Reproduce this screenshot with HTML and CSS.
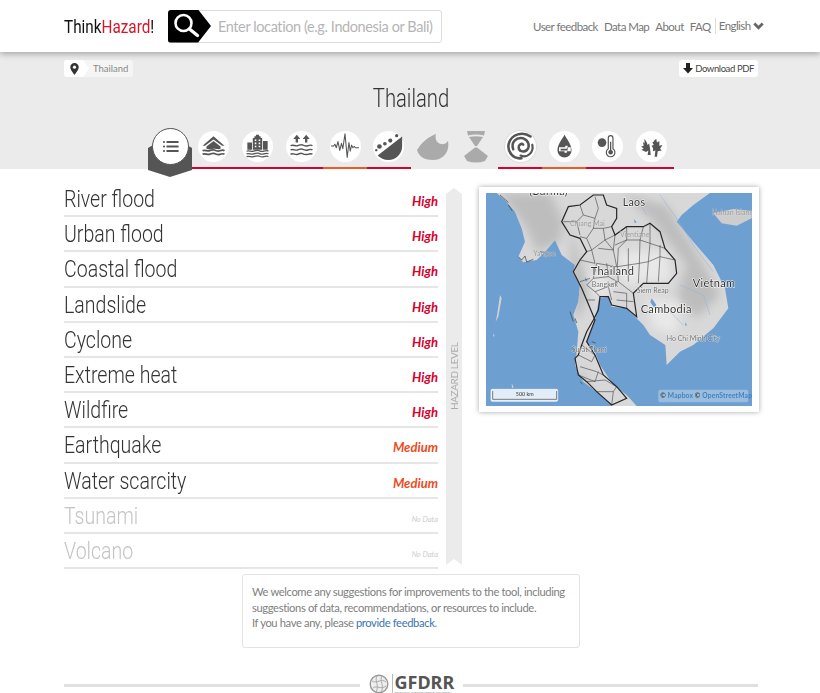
FILE: index.html
```html
<!DOCTYPE html>
<html lang="en">
<head>
<meta charset="utf-8">
<title>ThinkHazard! - Thailand</title>
<link rel="stylesheet" href="styles.css">
</head>
<body>
<header class="topbar">
  <div class="wrap topbar-in">
    <a class="logo">Think<span class="logo-red">Hazard</span>!</a>
    <div class="search">
      <span class="search-btn"><svg width="28" height="28" viewBox="0 0 28 28"><circle cx="11.5" cy="11" r="8" fill="none" stroke="#fff" stroke-width="2.6"/><path d="M17.5 17l8 6.5" stroke="#fff" stroke-width="3.4" stroke-linecap="round"/></svg></span>
      <span class="search-ph">Enter location (e.g. Indonesia or Bali)</span>
    </div>
    <nav class="nav">
      <a>User feedback</a><a>Data Map</a><a>About</a><a>FAQ</a>
      <span class="lang">English <svg width="11" height="8" viewBox="0 0 11 8"><path d="M1.3 1.5L5.5 5.7 9.7 1.5" fill="none" stroke="#666" stroke-width="2.8"/></svg></span>
    </nav>
  </div>
</header>

<section class="band">
  <div class="wrap">
    <div class="crumbs">
      <div class="crumb">
        <span class="crumb-pin"><svg width="9" height="12" viewBox="0 0 9 12"><path d="M4.5 0a4.2 4.2 0 0 0-4.2 4.2c0 2.8 4.2 7.6 4.2 7.6s4.2-4.8 4.2-7.6A4.2 4.2 0 0 0 4.5 0z" fill="#333"/><circle cx="4.5" cy="4.2" r="1.6" fill="#fff"/></svg></span>
        <span class="crumb-name">Thailand</span>
      </div>
      <a class="pdf"><svg width="10" height="11" viewBox="0 0 10 11"><path d="M3 0h4v5h3L5 10.5 0 5h3z" fill="#222"/></svg>Download PDF</a>
    </div>
    <h1 class="country">Thailand</h1>
    <div class="tabs">
      <div class="tab tab-active">
        <svg class="shield" width="44" height="42" viewBox="0 0 44 42"><path d="M0 13L22 0l22 13v22l-22 7-22-7z" fill="#555"/></svg>
        <span class="disc disc-active"><svg width="17" height="13" viewBox="0 0 20 16"><g fill="#555"><circle cx="2" cy="2.5" r="1.3"/><circle cx="2" cy="8" r="1.3"/><circle cx="2" cy="13.5" r="1.3"/><rect x="5" y="1.2" width="15" height="2.6" rx=".8"/><rect x="5" y="6.7" width="15" height="2.6" rx=".8"/><rect x="5" y="12.2" width="15" height="2.6" rx=".8"/></g></svg></span>
      </div>
      <div class="tab line-high"><span class="disc"><svg class="ico" viewBox="0 0 32 32"><path d="M2 15L16 3l14 12h-3L16 7 5 15z" fill="#555"/><path d="M7 16l9-7 9 7v3c-3 1.500-6-1-9 0s-6 1-9 0z" fill="#555"/><path d="M2 21.500c3-2 6 1 9 0s4-2 6-1 4 2 7 1 5-1 6 0M2 26c3-2 6 1 9 0s4-2 6-1 4 2 7 1 5-1 6 0" fill="none" stroke="#555" stroke-width="2.200"/></svg></span></div>
      <div class="tab line-high"><span class="disc"><svg class="ico" viewBox="0 0 32 32"><path d="M3 11h6v9H3zM10 5h2V3h2V1h4v2h2v2h2v15H10zM23 9h6v11h-6z" fill="#555"/><path d="M12.500 7h2v2h-2zM17.500 7h2v2h-2zM12.500 11h2v2h-2zM17.500 11h2v2h-2zM12.500 15h2v2h-2zM17.500 15h2v2h-2z" fill="#fff"/><path d="M2 22c3-1.500 6 1 9 0s4-1.500 6-1 4 2 7 1 5-1 6 0M2 25.500c3-1.500 6 1 9 0s4-1.500 6-1 4 2 7 1 5-1 6 0M2 29c3-1.500 6 1 9 0s4-1.500 6-1 4 2 7 1 5-1 6 0" fill="none" stroke="#555" stroke-width="1.600"/></svg></span></div>
      <div class="tab line-high"><span class="disc"><svg class="ico" viewBox="0 0 32 32"><path d="M10 1l4.500 5.500h-3V11h-3V6.500h-3zM22 1l4.500 5.500h-3V11h-3V6.500h-3z" fill="#555"/><path d="M2 15c3-2 6 1 9 0s4-2 6-1 4 2 7 1 5-1 6 0M2 20.500c3-2 6 1 9 0s4-2 6-1 4 2 7 1 5-1 6 0M2 26c3-2 6 1 9 0s4-2 6-1 4 2 7 1 5-1 6 0" fill="none" stroke="#555" stroke-width="1.800"/></svg></span></div>
      <div class="tab line-med"><span class="disc"><svg class="ico ico-wide" viewBox="0 0 32 32"><path d="M0 16h3l1.500-2 1.500 4 2-7 2 10 2-8 1.500 6L16 2l2.500 27 2-17 1.500 10 1.500-7 1.500 3 1.500-1.500 1.500 1.500H32" fill="none" stroke="#555" stroke-width="1.200" stroke-linejoin="round"/></svg></span></div>
      <div class="tab line-high"><span class="disc"><svg class="ico big" viewBox="0 0 32 32"><path d="M31 5v11c0 8-7 15-15 15-5 0-9-2-12-5z" fill="#555"/><circle cx="25" cy="4" r="1.800" fill="#555"/><circle cx="18" cy="9.500" r="2.300" fill="#555"/><circle cx="12" cy="13" r="2" fill="#555"/><circle cx="6" cy="16" r="2.600" fill="#555"/><circle cx="2.500" cy="20" r="1.300" fill="#555"/></svg></span></div>
      <div class="tab"><svg class="ghost" viewBox="0 0 32 32"><path d="M0 19C5 11 11 6 19 3c-2 7 3 11 8 10 2-.5 3-2 4-3 2 11-5 19-15 19C8 29 2 26 0 19z" fill="#aaa"/></svg></div>
      <div class="tab"><svg class="ghost" viewBox="0 0 32 32"><path d="M7 0c6-2 12-2 18 0l-1 4.500c-5-1.500-11-1.500-16 0zM9 6c5-1 9-1 14 0l-6 9h-2zM15 16.500h2l11 8.500-3 5c-6 2-12 2-18 0l-3-5z" fill="#aaa"/></svg></div>
      <div class="tab line-high"><span class="disc disc-ring"><svg class="ico big" viewBox="0 0 32 32"><g fill="none" stroke="#555" stroke-linecap="round"><path d="M27 5C19-1 6 2 3 13c-2 9 5 17 14 16" stroke-width="2.800"/><path d="M29 14c2 9-6 15-13 12" stroke-width="2.400"/><path d="M8 19C5 11 12 5 19 7c6 2 8 9 4 13-4 3-9 1-9-3 0-3 3-5 5-3" stroke-width="2.800"/></g></svg></span></div>
      <div class="tab line-med"><span class="disc"><svg class="ico" viewBox="0 0 32 32"><path d="M16 1c3 6 9 12 9 20a9 9 0 0 1-18 0c0-8 6-14 9-20z" fill="#555"/><path d="M9 17h8v-2h3v2h4v5h-5v2h-3v-2H9z" fill="#fff"/><path d="M11 19h8v-2h1v4h-9z" fill="#555"/></svg></span></div>
      <div class="tab line-high"><span class="disc"><svg class="ico" viewBox="0 0 32 32"><circle cx="9" cy="11" r="5.500" fill="#555"/><path d="M17 5a3 3 0 0 1 6 0v14a5.500 5.500 0 1 1-6 0z" fill="#fff" stroke="#555" stroke-width="1.500"/><path d="M19.200 10h1.600v10.500a3 3 0 1 1-1.600 0z" fill="#555"/></svg></span></div>
      <div class="tab line-high"><span class="disc"><svg class="ico" viewBox="0 0 32 32"><path d="M7 6l3 5 1 3 2-2 1 6 1 9h-4l1-6-3 2-6-3 3-1-3-3 3-1-1-5 2 2zM18 3l1 6 3-3 1 5 3-2v6l4-1-3 5 2 2-5 1-1 7h-3l1-8-3 1v-4l-2-3 3-1-2-3 2-1z" fill="#555"/></svg></span></div>
    </div>
  </div>
</section>

<main class="wrap content">
  <ul class="hazards">
    <li class="hazard"><span class="hname">River flood</span><em class="lvl high">High</em></li>
    <li class="hazard"><span class="hname">Urban flood</span><em class="lvl high">High</em></li>
    <li class="hazard"><span class="hname">Coastal flood</span><em class="lvl high">High</em></li>
    <li class="hazard"><span class="hname">Landslide</span><em class="lvl high">High</em></li>
    <li class="hazard"><span class="hname">Cyclone</span><em class="lvl high">High</em></li>
    <li class="hazard"><span class="hname">Extreme heat</span><em class="lvl high">High</em></li>
    <li class="hazard"><span class="hname">Wildfire</span><em class="lvl high">High</em></li>
    <li class="hazard"><span class="hname">Earthquake</span><em class="lvl med">Medium</em></li>
    <li class="hazard"><span class="hname">Water scarcity</span><em class="lvl med">Medium</em></li>
    <li class="hazard nodata"><span class="hname">Tsunami</span><em class="lvl none">No Data</em></li>
    <li class="hazard nodata"><span class="hname">Volcano</span><em class="lvl none">No Data</em></li>
  </ul>
  <div class="levelbar"><span class="leveltext">HAZARD LEVEL</span></div>
  <aside class="mapcard">
    <svg class="map" viewBox="18 24 798 639" width="266" height="213">
      <defs>
        <filter id="soft" x="-20%" y="-20%" width="140%" height="140%"><feGaussianBlur stdDeviation="14"/></filter>
        <clipPath id="landclip"><path d="M18 24H690L640 60 605 90 590 110 640 170 700 240 735 310 745 370 700 430 640 480 600 500 560 540 556 480 510 450 490 420 465 395 440 370 395 365 385 335 358 340 345 405 320 470 345 500 360 540 400 600 440 630 470 663H395L350 620 310 590 285 540 290 500 295 440 280 390 295 350 300 300 280 265 285 240 265 225 245 210 225 165 200 195 170 225 130 232 115 215 135 170 125 130 105 80 80 50 50 24z"/></clipPath>
      </defs>
      <rect x="18" y="24" width="798" height="639" fill="#6d9fd1"/>
      <path d="M18 24H690L640 60 605 90 590 110 640 170 700 240 735 310 745 370 700 430 640 480 600 500 560 540 556 480 510 450 490 420 465 395 440 370 395 365 385 335 358 340 345 405 320 470 345 500 360 540 400 600 440 630 470 663H395L350 620 310 590 285 540 290 500 295 440 280 390 295 350 300 300 280 265 285 240 265 225 245 210 225 165 200 195 170 225 130 232 115 215 135 170 125 130 105 80 80 50 50 24z" fill="#d8d8d8"/>
      <g clip-path="url(#landclip)">
        <path d="M60 24H210L250 110 240 170 170 200 140 130zM430 30L560 60 660 220 720 330 650 400 590 340 620 240 520 110zM270 120L300 230 330 300 300 400 280 380zM300 540L340 640 300 620z" fill="#bdbdbd" filter="url(#soft)"/>
        <path d="M410 200L560 200 570 290 480 290 430 300zM320 250L400 300 380 340 340 330zM500 340L600 350 590 450 520 430z" fill="#e8e8e8" filter="url(#soft)"/>
      </g>
      <path d="M700 85L760 72 815 78V100L770 122 725 115z" fill="#cdcdcd"/>
      <path d="M60 330L52 385 47 410 55 395 65 340zM40 445l4 8-4 2zM95 595l6 12-5 2z" fill="#d2d2d2"/>
      <path d="M515 340l14 20-6 8-12-16zM462 103l8 8-6 4zM315 275l8 12-6 3zM616 412l5 8-5 3z" fill="#6d9fd1"/>
      <path d="M540 30L590 100 640 180 700 260M600 300L670 330 690 390M470 40L500 90M560 370L610 420" fill="none" stroke="#8db2d8" stroke-width="1.500"/>
      <g fill="none" stroke="#3f3f3f" stroke-width="1.800" stroke-linejoin="round">
        <path d="M300 60L310 90 290 110 250 110M310 90L345 100 355 70 345 35M345 100L340 130 370 130 395 125M290 110L300 150M340 130L320 160 300 155M370 130L375 165 405 150M320 160L335 195 375 165M335 195L320 200M335 195L345 235 300 225M375 165L400 195 355 190M400 195L405 150M400 195L410 245 350 235M440 125L440 165 405 180M440 165L480 165 490 125M480 165L510 175 510 115M510 175L555 190M440 165L415 190 412 245M480 165L478 235 412 245M510 175L505 230 478 235M505 230L540 215 540 180M540 215L585 225M540 215L535 290M505 230L500 295M478 235L475 295M445 190L445 290M412 245L415 290M350 235L340 280 320 300M340 280L385 275 412 290M385 275L380 235M380 305L415 290 460 325M320 300L345 320 385 305 395 345M345 320L360 335M400 320L440 325 440 370M410 345L460 350M320 345L345 345M300 290L330 280M305 480L345 510M295 510L335 530 345 510M300 545L350 560 370 570M295 570L345 590 355 560M320 590L375 585 410 605M350 620L400 620 410 605M395 660L400 620"/>
      </g>
      <path d="M340 30L370 30 380 60 410 70 410 100 395 125 405 150 440 125 490 125 510 115 540 140 555 190 585 225 590 265 565 295 490 295 460 325 470 395 440 370 395 360 385 335 360 335 355 375 340 405 320 440 305 480 295 510 285 520 295 570 320 590 350 620 395 660 440 640 410 605 370 570 345 510 320 470 345 405 320 345 305 310 280 260 300 225 320 200 300 160 270 150 245 110 265 65 300 60z" fill="none" stroke="#262626" stroke-width="3.600"/>
      <path d="M115 215l10 10 10-12 5 18 20-8M180 200l15 2M270 380l10 30M285 400l5 14M275 490l10 8M335 470l12 4M60 30l25 22M85 60l12 18M300 590l8 8" fill="none" stroke="#444" stroke-width="2.200"/>
      <g class="mt">
        <text class="mt-mid" x="148" y="30">(Burma)</text>
        <text class="mt-mid" x="428" y="62">Laos</text>
        <text class="mt-big" x="332" y="271">Thailand</text>
        <text class="mt-big" x="638" y="305">Vietnam</text>
        <text class="mt-big" x="482" y="385">Cambodia</text>
        <text class="mt-sm" x="470" y="323">Siem Reap</text>
        <text class="mt-sm" x="560" y="469">Ho Chi Minh City</text>
        <text class="mt-sm" x="335" y="305">Bangkok</text>
        <text class="mt-sm" x="275" y="501">Surat Thani</text>
        <text class="mt-sm mt-pale" x="696" y="90">Hainan Island</text>
        <text class="mt-sm mt-pale" x="270" y="122">Chiang Mai</text>
        <text class="mt-sm mt-pale" x="420" y="157">Vientiane</text>
        <text class="mt-sm mt-pale" x="160" y="212">Yangon</text>
      </g>
      <rect x="33" y="613" width="200" height="36" rx="4" fill="#e3edf7" stroke="#fff" stroke-width="2"/>
      <path d="M38 618v25h192v-25" fill="none" stroke="#444" stroke-width="2"/>
      <text class="mt-scale" x="134" y="634" text-anchor="middle">500 km</text>
      <rect x="535" y="614" width="270" height="38" rx="6" fill="#fff" opacity=".3"/>
      <text class="mt-attr" x="541" y="640"><tspan class="mt-c">© </tspan>Mapbox<tspan class="mt-c"> © </tspan>OpenStreetMap</text>
    </svg>
  </aside>
</main>

<div class="note">
  <p>We welcome any suggestions for improvements to the tool, including suggestions of data, recommendations, or resources to include.<br>If you have any, please <a class="note-link">provide feedback</a>.</p>
</div>

<footer class="wrap foot">
  <span class="foot-rule"></span>
  <div class="gfdrr">
    <svg width="20" height="20" viewBox="0 0 20 20"><circle cx="10" cy="10" r="8.800" fill="#eee" stroke="#999" stroke-width="1.400"/><path d="M3 7c4 3 10-3 14 1M4 14c4-3 8 2 13-2M8 2c-3 5 3 9-1 16M13 2c-3 5 3 10-1 16" fill="none" stroke="#aaa"/></svg>
    <span class="gfdrr-text">GFDRR<small class="gfdrr-sub">Global Facility for Disaster Reduction and Recovery</small></span>
  </div>
  <span class="foot-rule"></span>
</footer>
</body>
</html>
```
FILE: styles.css
```css
* { box-sizing: border-box; }
html, body { margin: 0; padding: 0; }
body { font-family: "Lato", "Noto Sans", sans-serif; color: #666; background: #fff; height: 693px; overflow: hidden; }
.wrap { width: 694px; margin-left: 64px; }

.topbar { height: 52px; background: #fff; box-shadow: 0 2px 6px rgba(0,0,0,.3); position: relative; z-index: 2; }
.topbar-in { display: flex; align-items: center; height: 52px; width: 700px; }
.logo { font-family: "Roboto", sans-serif; font-size: 18px; color: #111; width: 104px; flex: none; transform: scaleX(.85); transform-origin: left center; white-space: nowrap; }
.logo-red { color: #d9152a; }
.search { display: flex; align-items: center; width: 274px; height: 33px; border: 1px solid #ddd; border-radius: 3px; flex: none; }
.search-btn { width: 43px; height: 33px; margin: -1px 0 -1px -1px; background: #000; border-radius: 3px 0 0 3px; clip-path: polygon(0 0, 70% 0, 100% 50%, 70% 100%, 0 100%); display: flex; align-items: center; padding-left: 4px; flex: none; }
.search-ph { font-size: 14.500px; letter-spacing: -.4px; color: #b5b5b5; margin-left: 7px; white-space: nowrap; }
.nav { display: flex; align-items: center; margin-left: auto; font-size: 11.500px; letter-spacing: -.55px; color: #777; gap: 6px; }
.lang { border-left: 1px solid #ddd; padding-left: 3px; margin-left: -2px; line-height: 16px; }

.band { background: #ebebeb; height: 117px; }
.crumbs { display: flex; justify-content: space-between; align-items: center; padding-top: 8px; }
.crumb { display: flex; align-items: center; height: 17px; background: #f5f5f5; border-radius: 3px; font-size: 9.500px; color: #888; }
.crumb-pin { width: 25px; height: 17px; background: #fff; clip-path: polygon(0 0, 76% 0, 100% 50%, 76% 100%, 0 100%); display: flex; align-items: center; padding-left: 6px; border-radius: 3px 0 0 3px; }
.crumb-name { padding: 0 5px 0 4px; }
.pdf { display: flex; align-items: center; height: 17px; background: #fff; border-radius: 3px; padding: 0 4px; font-size: 9.500px; letter-spacing: -.4px; color: #444; gap: 2px; }
.country { margin: 7px 0 0; text-align: center; font-family: "Roboto", sans-serif; font-weight: 300; font-size: 25px; line-height: 30px; color: #333; height: 30px; transform: scaleX(.81); }
.tabs { display: flex; margin: 10.500px 0 0 84px; position: relative; }
.tab { width: 43.800px; height: 44.500px; display: flex; align-items: flex-start; justify-content: center; position: relative; padding-top: 6px; }
.line-high { border-bottom: 2px solid #d8002c; }
.line-med { border-bottom: 2px solid #ef5a28; }
.disc { width: 31px; height: 31px; border-radius: 50%; background: #fff; display: flex; align-items: center; justify-content: center; flex: none; }
.tab-active { z-index: 1; padding-top: 0; }
.shield { position: absolute; left: 0; top: 10.500px; }
.disc-active { width: 37px; height: 37px; border: 1.500px solid #555; position: absolute; left: 3.500px; top: 3.500px; }
.disc-ring { box-shadow: 0 0 0 1px #ddd; }
.ico { width: 25px; height: 25px; }
.ico-wide { width: 28px; height: 28px; }
.ico.big { width: 29px; height: 29px; }
.ghost { width: 32px; height: 32px; }

.content { display: flex; align-items: flex-start; padding-top: 19px; width: 695px; }
.hazards { list-style: none; margin: -6px 0 0; padding: 0; width: 374px; flex: none; }
.hazard { height: 35.200px; display: flex; justify-content: space-between; align-items: center; border-bottom: 2px solid #e6e6e6; }
.hname { font-family: "Roboto", sans-serif; font-weight: 300; font-size: 23px; color: #333; line-height: 28px; display: inline-block; transform: scaleX(.85); transform-origin: left center; white-space: nowrap; margin-top: 3px; }
.lvl { font-weight: 700; font-style: italic; font-size: 13px; margin-top: 5px; }
.high { color: #d8002c; }
.med { color: #ee4a22; }
.none { color: #ccc; font-size: 7.500px; font-weight: 400; margin-top: 9px; }
.nodata .hname { color: #c4c4c4; }
.levelbar { width: 16px; height: 377px; margin: 0 0 0 8px; background: #ebebeb; clip-path: polygon(50% 0, 100% 6px, 100% 100%, 50% calc(100% - 6px), 0 100%, 0 6px); display: flex; justify-content: center; padding-top: 154px; flex: none; }
.leveltext { writing-mode: vertical-rl; transform: rotate(180deg); font-size: 10px; letter-spacing: -.4px; color: #aaa; height: 68px; white-space: nowrap; line-height: 16px; }
.mapcard { margin-left: 17px; margin-top: -1px; width: 280px; height: 225px; padding: 6px 7px; background: #fff; box-shadow: 0 0 5px rgba(0,0,0,.35); flex: none; }
.map { display: block; filter: blur(.35px); }
.map text { font-family: "Lato", sans-serif; }
.mt-big { font-size: 33px; fill: #333; stroke: #fff; stroke-width: 3px; paint-order: stroke; letter-spacing: 1px; }
.mt-mid { font-size: 32px; fill: #333; stroke: #fff; stroke-width: 3px; paint-order: stroke; letter-spacing: 1px; }
.mt-sm { font-size: 21px; fill: #555; stroke: #fff; stroke-width: 2px; paint-order: stroke; opacity: .85; }
.mt-pale { fill: #888; stroke: #ddd; opacity: .7; }
.mt-scale { font-size: 16px; fill: #333; }
.mt-attr { font-size: 20px; fill: #3f83c0; font-weight: 700; letter-spacing: .5px; }
.mt-c { fill: #444; }

.note { width: 338px; height: 74px; margin: 5px 0 0 242px; padding: 9px 9px; border: 1px solid #e3e3e3; border-radius: 3px; font-size: 11.200px; letter-spacing: -.37px; line-height: 15.500px; color: #808080; }
.note p { margin: 0; }
.note-link { color: #3a76b0; }

.foot { display: flex; align-items: center; margin-top: 25px; height: 21px; gap: 9px; }
.foot-rule { flex: 1; height: 3px; background: #e0e0e0; margin-top: 3px; }
.gfdrr { display: flex; align-items: center; gap: 3px; }
.gfdrr-text { font-family: "Noto Sans", sans-serif; font-size: 18px; font-weight: 700; color: #555; line-height: 17px; display: flex; flex-direction: column; border-left: 1px solid #bbb; padding-left: 2px; width: 62px; }
.gfdrr-sub { font-size: 2.400px; font-weight: 400; line-height: 3px; color: #888; white-space: nowrap; }
```
